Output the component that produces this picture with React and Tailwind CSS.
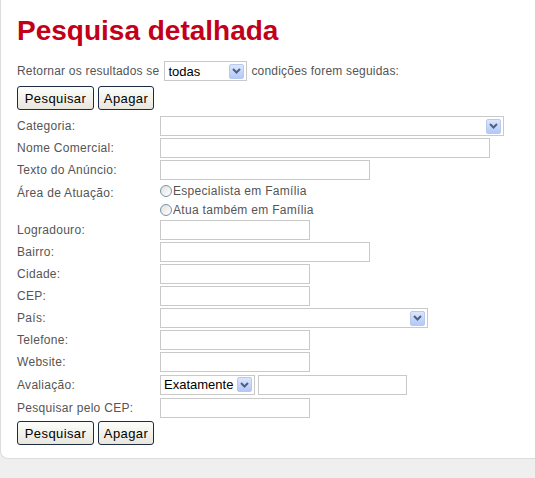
import React from "react";

const font = { fontFamily: '"Liberation Sans", Arial, sans-serif' };

function Arrow() {
  return (
    <span className="flex h-[15px] w-[15px] items-center justify-center rounded-[2px] border border-[#b8c8ef] bg-gradient-to-b from-[#dce6fd] to-[#b4c8f6]">
      <svg width="9" height="6" viewBox="0 0 9 6">
        <path d="M1 1 L4.5 4.5 L8 1" fill="none" stroke="#4d6185" strokeWidth="2" />
      </svg>
    </span>
  );
}

function Select({ w, value = "", className = "" }) {
  return (
    <div
      className={`flex h-[20px] items-center justify-between border border-[#c9c9c9] bg-white pl-[3px] pr-[2px] text-[13px] text-black ${className}`}
      style={{ width: w }}
    >
      <span className="leading-none">{value}</span>
      <Arrow />
    </div>
  );
}

function Input({ w, className = "" }) {
  return <div className={`h-[20px] border border-[#c9c9c9] bg-white ${className}`} style={{ width: w }} />;
}

function Btn({ children, w }) {
  return (
    <button
      className="h-[24px] rounded-[3px] border border-[#1c2c44] bg-gradient-to-b from-[#fdfdfb] to-[#e8e6dc] text-[13px] leading-none tracking-[0.4px] text-black"
      style={{ width: w }}
    >
      {children}
    </button>
  );
}

function Buttons() {
  return (
    <div className="flex gap-[4px]">
      <Btn w={77}>Pesquisar</Btn>
      <Btn w={56}>Apagar</Btn>
    </div>
  );
}

function Row({ label, children, h = "h-[22px]" }) {
  return (
    <div className={`flex items-center ${h}`}>
      <div className="w-[143px] text-[12px] tracking-[0.3px] text-[#555]">{label}</div>
      {children}
    </div>
  );
}

function Radio({ label }) {
  return (
    <div className="flex h-[19px] items-center text-[12px] tracking-[0.3px] text-[#555]">
      <span className="mr-px h-[12px] w-[12px] rounded-full border border-[#7c93a8] bg-gradient-to-br from-[#e0e0dc] to-white" />
      {label}
    </div>
  );
}

export default function App() {
  return (
    <div className="min-h-[478px] w-[535px] bg-[#efefef]" style={font}>
      <div className="rounded-bl-[8px] border-b border-l border-[#dcdcdc] bg-white pb-[13px] pl-[16px] pt-[14px]">
        <h1 className="text-[28px] font-bold leading-[34px] text-[#c30019]">Pesquisa detalhada</h1>
        <div className="mt-[13px] flex items-center text-[12px] tracking-[0.2px] text-[#555]">
          <span>Retornar os resultados se</span>
          <Select w={83} value="todas" className="ml-[5px] mr-[4px] tracking-normal" />
          <span>condições forem seguidas:</span>
        </div>
        <div className="mt-[5px]">
          <Buttons />
        </div>
        <div className="mt-[5px] flex flex-col">
          <Row label="Categoria:">
            <Select w={344} />
          </Row>
          <Row label="Nome Comercial:">
            <Input w={330} />
          </Row>
          <Row label="Texto do Anúncio:">
            <Input w={210} />
          </Row>
          <div className="flex">
            <div className="w-[143px] pt-[3px] text-[12px] tracking-[0.3px] text-[#555]">Área de Atuação:</div>
            <div className="flex flex-col">
              <Radio label="Especialista em Família" />
              <Radio label="Atua também em Família" />
            </div>
          </div>
          <Row label="Logradouro:">
            <Input w={150} />
          </Row>
          <Row label="Bairro:">
            <Input w={210} />
          </Row>
          <Row label="Cidade:">
            <Input w={150} />
          </Row>
          <Row label="CEP:">
            <Input w={150} />
          </Row>
          <Row label="País:">
            <Select w={268} />
          </Row>
          <Row label="Telefone:">
            <Input w={150} />
          </Row>
          <Row label="Website:">
            <Input w={150} />
          </Row>
          <Row label="Avaliação:" h="h-[23px]">
            <Select w={95} value="Exatamente" />
            <Input w={149} className="ml-[3px]" />
          </Row>
          <Row label="Pesquisar pelo CEP:" h="h-[23px]">
            <Input w={150} />
          </Row>
        </div>
        <div className="mt-[2px]">
          <Buttons />
        </div>
      </div>
    </div>
  );
}
